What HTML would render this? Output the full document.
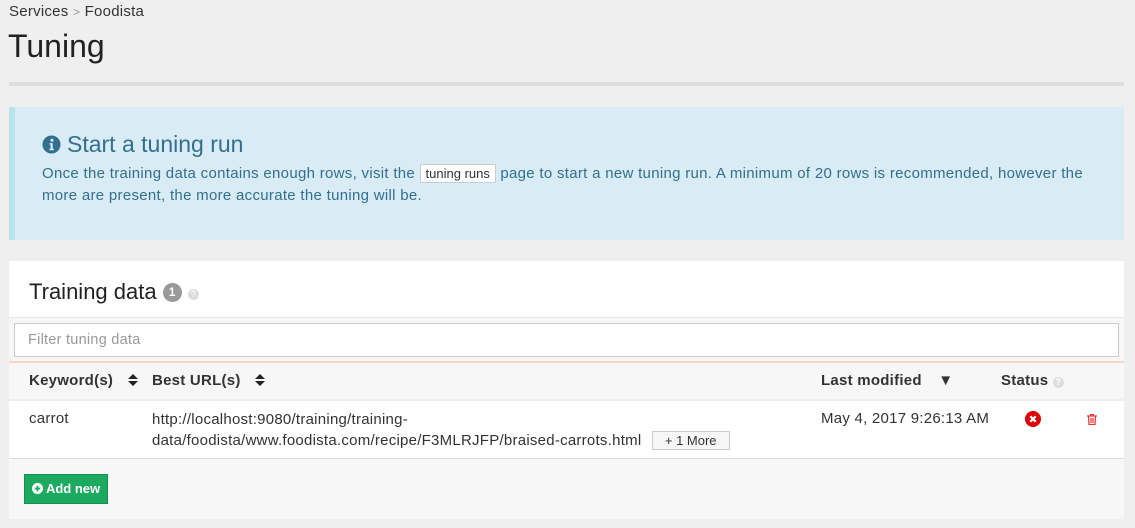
<!DOCTYPE html>
<html><head><meta charset="utf-8"><style>
*{box-sizing:border-box;margin:0;padding:0}
body{width:1135px;height:528px;background:#efefef;font-family:"Liberation Sans",sans-serif;color:#333;position:relative;overflow:hidden;font-size:15px;letter-spacing:.25px}
.abs{position:absolute}
.sort{display:inline-block;vertical-align:-1px}
</style></head><body>
<div class="abs" style="left:9px;top:3px;font-size:15px;color:#333">Services <span style="color:#999;font-size:12px">&gt;</span> Foodista</div>
<div class="abs" style="left:8px;top:28px;font-size:32px;color:#222;letter-spacing:0">Tuning</div>
<div class="abs" style="left:9px;top:82px;width:1115px;height:4px;background:#dedede"></div>

<div class="abs" style="left:9px;top:107px;width:1115px;height:133px;background:#d9ebf4;border-left:6px solid #b8e4ee"></div>
<div class="abs" style="left:42px;top:131px;font-size:23px;color:#31708f;display:flex;align-items:center;letter-spacing:0">
<svg width="19" height="19" viewBox="0 0 20 20" style="margin-right:6px"><circle cx="10" cy="10" r="9.5" fill="#31708f"/><circle cx="10.5" cy="5.5" r="1.6" fill="#d9ebf4"/><path d="M8 8.5h3.3v6h1.2v1.5H7.8v-1.5h1.2v-4.5H8z" fill="#d9ebf4"/></svg>Start a tuning run</div>
<div class="abs" style="left:42px;top:163px;width:1070px;line-height:22px;color:#31708f;font-size:15px;letter-spacing:.3px">Once the training data contains enough rows, visit the <span style="background:#fff;color:#333;border:1px solid #ccc;padding:1px 5px;font-size:13px;letter-spacing:0">tuning runs</span> page to start a new tuning run. A minimum of 20 rows is recommended, however the more are present, the more accurate the tuning will be.</div>

<div class="abs" style="left:9px;top:261px;width:1115px;height:258px;background:#f7f7f7"></div>
<div class="abs" style="left:9px;top:261px;width:1115px;height:57px;background:#fff;border-bottom:1px solid #e6e6e6"></div>
<div class="abs" style="left:29px;top:279px;font-size:22px;color:#222;display:flex;align-items:center;letter-spacing:0">Training data
<span style="display:inline-block;width:19px;height:19px;border-radius:10px;background:#999;color:#fff;font-size:12px;font-weight:bold;text-align:center;line-height:19px;margin-left:6px">1</span>
<span style="display:inline-block;width:11px;height:11px;border-radius:6px;background:#ddd;color:#fff;font-size:9px;text-align:center;line-height:11px;margin-left:6px;margin-top:5px">?</span></div>
<div class="abs" style="left:14px;top:323px;width:1105px;height:34px;background:#fff;border:1px solid #ccc;padding-left:13px;line-height:32px;color:#999;font-size:14.5px">Filter tuning data</div>
<div class="abs" style="left:9px;top:361px;width:1115px;height:2px;background:#f9d5c8"></div>
<div class="abs" style="left:9px;top:399px;width:1115px;height:60px;background:#fff;border-top:2px solid #eee;border-bottom:1px solid #ddd"></div>
<div class="abs" style="top:372px;left:29px;font-weight:bold;color:#333">Keyword(s) <svg class="sort" style="margin-left:10px" width="10" height="12" viewBox="0 0 10 12"><path d="M5 0L10 5H0zM5 12L0 7h10z" fill="#222"/></svg></div>
<div class="abs" style="top:372px;left:152px;font-weight:bold;color:#333">Best URL(s) <svg class="sort" style="margin-left:10px" width="10" height="12" viewBox="0 0 10 12"><path d="M5 0L10 5H0zM5 12L0 7h10z" fill="#222"/></svg></div>
<div class="abs" style="top:372px;left:821px;font-weight:bold;color:#333">Last modified <span style="margin-left:12px">&#9660;&#xFE0E;</span></div>
<div class="abs" style="top:372px;left:1001px;font-weight:bold;color:#333">Status <span style="display:inline-block;width:11px;height:11px;border-radius:6px;background:#ddd;color:#fff;font-size:9px;line-height:11px;text-align:center;vertical-align:0">?</span></div>
<div class="abs" style="top:410px;left:29px">carrot</div>
<div class="abs" style="top:409px;left:152px;line-height:21px;width:620px">http://localhost:9080/training/training-<br>data/foodista/www.foodista.com/recipe/F3MLRJFP/braised-carrots.html <span style="display:inline-block;border:1px solid #ccc;background:#f7f7f7;font-size:13px;padding:0 12px;line-height:17px;margin-left:6px;letter-spacing:0">+ 1 More</span></div>
<div class="abs" style="top:410px;left:821px">May 4, 2017 9:26:13 AM</div>
<svg class="abs" style="left:1025px;top:411px" width="16" height="16" viewBox="0 0 16 16"><circle cx="8" cy="8" r="8" fill="#d00"/><path d="M5.3 5.3l5.4 5.4M10.7 5.3l-5.4 5.4" stroke="#fff" stroke-width="2.2"/></svg>
<svg class="abs" style="left:1087px;top:414px" width="10" height="11" viewBox="0 0 10 11"><path d="M0 2h10M3.5 2V0.5h3V2M1.5 2.5l.5 8h6l.5-8M4 4v5M6 4v5" stroke="#e33" fill="none" stroke-width="1.2"/></svg>
<div class="abs" style="left:24px;top:474px;width:84px;height:30px;background:#1caa60;border:1px solid #159050;color:#fff;font-size:13px;line-height:28px;text-align:center;letter-spacing:0;font-weight:bold"><svg width="11" height="11" viewBox="0 0 12 12" style="vertical-align:-1px"><circle cx="6" cy="6" r="6" fill="#fff"/><path d="M6 3v6M3 6h6" stroke="#1caa60" stroke-width="2"/></svg> Add new</div>
</body></html>
